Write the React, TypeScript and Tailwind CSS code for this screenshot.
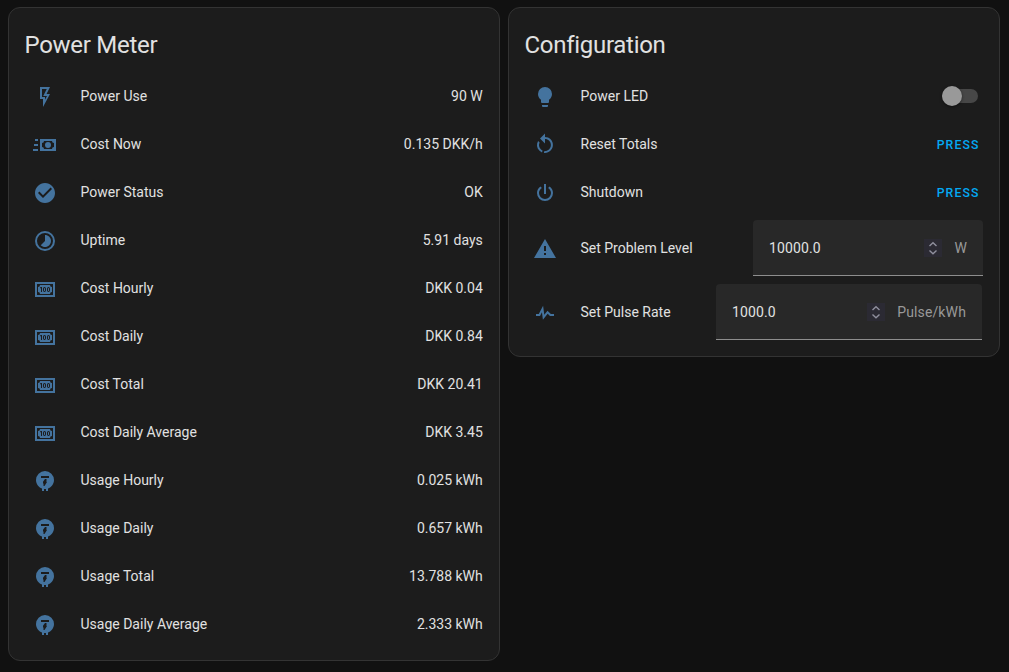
import type { ReactNode } from 'react';

const icons = {
  flash: 'M7,2H17L13.5,9H17L10,22V14H7V2M9,4V12H12V14.66L14,11H10.24L13.76,4H9Z',
  cashFast:
    'M23,18H7V6H23V18M11,8A2,2 0 0,1 9,10V14A2,2 0 0,1 11,16H19A2,2 0 0,1 21,14V10A2,2 0 0,1 19,8H11M15,9A3,3 0 0,1 18,12A3,3 0 0,1 15,15A3,3 0 0,1 12,12A3,3 0 0,1 15,9M5,8H2V6H5V8M5,13H1V11H5V13M5,18H0V16H5V18Z',
  check:
    'M12 2C6.5 2 2 6.5 2 12S6.5 22 12 22 22 17.5 22 12 17.5 2 12 2M10 17L5 12L6.41 10.59L10 14.17L17.59 6.58L19 8L10 17Z',
  timelapse:
    'M12,20A8,8 0 0,1 4,12A8,8 0 0,1 12,4A8,8 0 0,1 20,12A8,8 0 0,1 12,20M12,2A10,10 0 0,0 2,12A10,10 0 0,0 12,22A10,10 0 0,0 22,12A10,10 0 0,0 12,2M16.24,7.76C15.07,6.58 13.53,6 12,6V12L7.76,16.24C10.1,18.58 13.9,18.58 16.24,16.24C18.59,13.9 18.59,10.1 16.24,7.76Z',
  cash100:
    'M2,5H22V20H2V5M20,18V7H4V18H20M17,8A2,2 0 0,0 19,10V15A2,2 0 0,0 17,17H7A2,2 0 0,0 5,15V10A2,2 0 0,0 7,8H17M17,13V12C17,10.9 16.33,10 15.5,10C14.67,10 14,10.9 14,12V13C14,14.1 14.67,15 15.5,15C16.33,15 17,14.1 17,13M15.5,11A0.5,0.5 0 0,1 16,11.5V13.5A0.5,0.5 0 0,1 15.5,14A0.5,0.5 0 0,1 15,13.5V11.5A0.5,0.5 0 0,1 15.5,11M13,13V12C13,10.9 12.33,10 11.5,10C10.67,10 10,10.9 10,12V13C10,14.1 10.67,15 11.5,15C12.33,15 13,14.1 13,13M11.5,11A0.5,0.5 0 0,1 12,11.5V13.5A0.5,0.5 0 0,1 11.5,14A0.5,0.5 0 0,1 11,13.5V11.5A0.5,0.5 0 0,1 11.5,11M8,15H9V10H8L7,10.5V11.5L8,11V15Z',
  meter:
    'M12,2A9,9 0 0,0 3,11C3,14.91 5.5,18.24 9,19.47V22H11V20H13V22H15V19.47C18.5,18.23 21,14.9 21,11A9,9 0 0,0 12,2M16,9H8V7H16V9M14,13L11.5,17H10.5V14.5H10V12.75L12,10H13.5V13H14Z',
  bulb: 'M12,2A7,7 0 0,0 5,9C5,11.38 6.19,13.47 8,14.74V17A1,1 0 0,0 9,18H15A1,1 0 0,0 16,17V14.74C17.81,13.47 19,11.38 19,9A7,7 0 0,0 12,2M9,21A1,1 0 0,0 10,22H14A1,1 0 0,0 15,21V20H9V21Z',
  restart:
    'M12,4C14.1,4 16.1,4.8 17.6,6.3C20.7,9.4 20.7,14.5 17.6,17.6C15.8,19.5 13.3,20.2 10.9,19.9L11.4,17.9C13.1,18.1 14.9,17.5 16.2,16.2C18.5,13.9 18.5,10.1 16.2,7.7C15.1,6.6 13.5,6 12,6V10.6L7,5.6L12,0.6V4M6.3,17.6C3.7,15 3.3,11 5.1,7.9L6.6,9.4C5.5,11.6 5.9,14.4 7.8,16.2C8.3,16.7 8.9,17.1 9.6,17.4L9,19.4C8,19 7.1,18.4 6.3,17.6Z',
  power:
    'M16.56,5.44L15.11,6.89C16.84,7.94 18,9.83 18,12A6,6 0 0,1 12,18A6,6 0 0,1 6,12C6,9.83 7.16,7.94 8.88,6.88L7.44,5.44C5.36,6.88 4,9.28 4,12A8,8 0 0,0 12,20A8,8 0 0,0 20,12C20,9.28 18.64,6.88 16.56,5.44M13,3H11V13H13',
  alert: 'M13 14H11V9H13M13 18H11V16H13M1 21H23L12 2L1 21Z',
  pulse:
    'M3,13H5.79L10.1,4.79L11.28,13.75L14.5,9.66L17.83,13H21V15H17L14.67,12.67L9.92,18.73L8.94,11.31L7,15H3V13Z',
};

type IconName = keyof typeof icons;

const readings: { icon: IconName; label: string; value: string }[] = [
  { icon: 'flash', label: 'Power Use', value: '90 W' },
  { icon: 'cashFast', label: 'Cost Now', value: '0.135 DKK/h' },
  { icon: 'check', label: 'Power Status', value: 'OK' },
  { icon: 'timelapse', label: 'Uptime', value: '5.91 days' },
  { icon: 'cash100', label: 'Cost Hourly', value: 'DKK 0.04' },
  { icon: 'cash100', label: 'Cost Daily', value: 'DKK 0.84' },
  { icon: 'cash100', label: 'Cost Total', value: 'DKK 20.41' },
  { icon: 'cash100', label: 'Cost Daily Average', value: 'DKK 3.45' },
  { icon: 'meter', label: 'Usage Hourly', value: '0.025 kWh' },
  { icon: 'meter', label: 'Usage Daily', value: '0.657 kWh' },
  { icon: 'meter', label: 'Usage Total', value: '13.788 kWh' },
  { icon: 'meter', label: 'Usage Daily Average', value: '2.333 kWh' },
];

function Card({ title, children }: { title: string; children: ReactNode }) {
  return (
    <section className="w-[492px] rounded-xl border border-[#333333] bg-[#1c1c1c] pb-4 pl-[15.5px] pr-4 pt-3">
      <h1 className="mb-2 h-[48px] text-2xl leading-[50px] tracking-[-0.012em]">{title}</h1>
      <div className="flex flex-col gap-2">{children}</div>
    </section>
  );
}

function Row({ icon, label, tall, children }: { icon: IconName; label: string; tall?: boolean; children: ReactNode }) {
  return (
    <div className={`flex items-center ${tall ? 'h-14' : 'h-10'}`}>
      <div className="ml-[0.5px] flex w-10 shrink-0 justify-center pt-0.5">
        <svg viewBox="0 0 24 24" className="size-6 fill-[#44739e]">
          <path d={icons[icon]} />
        </svg>
      </div>
      <span className="ml-[15.5px] grow text-sm leading-5">{label}</span>
      {children}
    </div>
  );
}

function Press() {
  return (
    <button className="mr-[3.5px] pt-px text-[12.25px] font-medium leading-5 tracking-[1.1px] text-[#03a9f4]">
      PRESS
    </button>
  );
}

function NumberField({ value, unit, className }: { value: string; unit: string; className: string }) {
  return (
    <div className={`flex h-14 shrink-0 items-center rounded-t border-b border-[#8e8e8e] bg-[#282828] px-4 text-sm tracking-[0.009375em] ${className}`}>
      <span className="grow">{value}</span>
      <span className="mr-3 flex size-[18px] items-center justify-center bg-[#2b2a33]">
        <svg viewBox="0 0 18 18" className="size-[18px] fill-none stroke-[#8f8f9d] stroke-[1.4]">
          <path d="M5.5 7L9 3.7L12.5 7M5.5 11.5L9 14.8L12.5 11.5" />
        </svg>
      </span>
      <span className="text-[#999999]">{unit}</span>
    </div>
  );
}

export default function App() {
  return (
    <main className="flex h-screen items-start gap-2 overflow-hidden bg-[#111111] pl-2 pt-[7px] font-['Roboto',sans-serif] text-[#e1e1e1]">
      <Card title="Power Meter">
        {readings.map((r) => (
          <Row key={r.label} icon={r.icon} label={r.label}>
            <span className="mr-[0.25px] text-sm leading-5">{r.value}</span>
          </Row>
        ))}
      </Card>
      <Card title="Configuration">
        <Row icon="bulb" label="Power LED">
          <button role="switch" aria-checked="false" aria-label="Power LED" className="mr-[5px] flex h-3.5 w-9 items-center rounded-full bg-[#474747]">
            <span className="size-5 rounded-full bg-[#999999] shadow-[0_1px_3px_rgba(0,0,0,0.5)]" />
          </button>
        </Row>
        <Row icon="restart" label="Reset Totals">
          <Press />
        </Row>
        <Row icon="power" label="Shutdown">
          <Press />
        </Row>
        <Row icon="alert" label="Set Problem Level" tall>
          <NumberField value="10000.0" unit="W" className="w-[230px]" />
        </Row>
        <Row icon="pulse" label="Set Pulse Rate" tall>
          <NumberField value="1000.0" unit="Pulse/kWh" className="mr-px w-[266px]" />
        </Row>
      </Card>
    </main>
  );
}
